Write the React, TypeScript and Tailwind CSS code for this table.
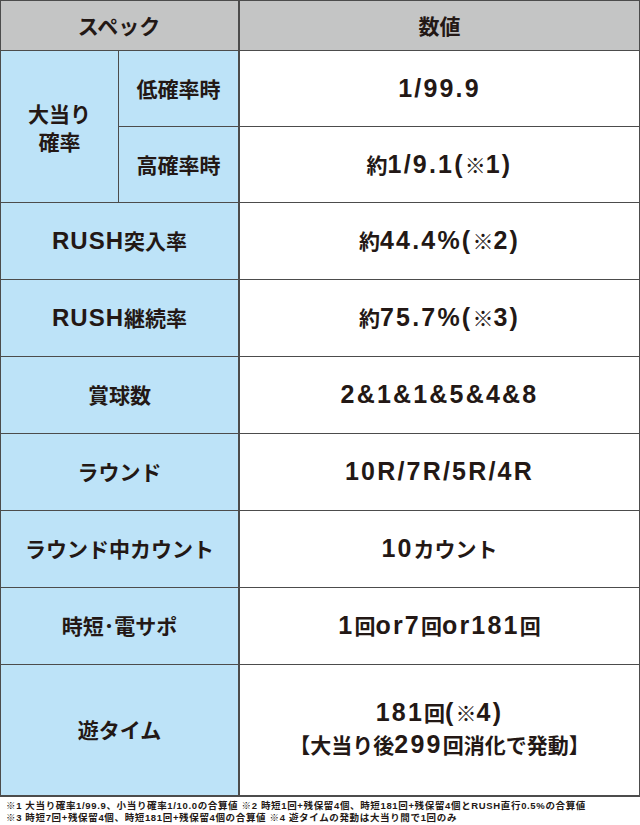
const CJK = /[\u203b\u3000-\u30ff\u4e00-\u9fff\uff00-\uffef]/;

type Run = { cjk: boolean; text: string };

const toRuns = (s: string): Run[] => {
  const out: Run[] = [];
  for (const ch of s) {
    const cjk = CJK.test(ch);
    const last = out[out.length - 1];
    if (last && last.cjk === cjk) last.text += ch;
    else out.push({ cjk, text: ch });
  }
  return out;
};

// Latin is drawn wider-spaced than the kana/kanji, as on the original sheet
const Mixed = ({ text, wide }: { text: string; wide?: boolean }) => (
  <>
    {toRuns(text).map((r, i) =>
      r.cjk ? (
        <span key={i} className="font-['Noto_Sans_CJK_JP',sans-serif] text-[21px]">
          {r.text}
        </span>
      ) : (
        <span
          key={i}
          className={
            wide
              ? "font-['Liberation_Sans',sans-serif] text-[25px] tracking-[2.2px]"
              : "font-['Liberation_Sans',sans-serif] text-[24px] tracking-[1px]"
          }
        >
          {r.text}
        </span>
      )
    )}
  </>
);

const rows = [
  { label: 'RUSH突入率', value: '約44.4%(※2)' },
  { label: 'RUSH継続率', value: '約75.7%(※3)' },
  { label: '賞球数', value: '2&1&1&5&4&8' },
  { label: 'ラウンド', value: '10R/7R/5R/4R' },
  { label: 'ラウンド中カウント', value: '10カウント' },
  { label: '時短･電サポ', value: '1回or7回or181回' },
];

const label = 'flex items-center justify-center bg-[#bde3f8] text-center';
const value = 'ml-px flex items-center justify-center bg-white text-center';

export default function App() {
  return (
    <div className="w-[640px] h-[825px] bg-white font-['Liberation_Sans','Noto_Sans_CJK_JP',sans-serif] font-bold text-[#231815]">
      <div className="grid grid-cols-[117px_119px_1fr] grid-rows-[49px_75px_75px_76px_76px_76px_76px_76px_76px_130px] gap-px bg-[#4c4c4c] p-px pb-[2px]">
        {/* header */}
        <div className="col-span-2 flex items-center justify-center bg-[#c4c5c5] pr-px text-[21px] font-['Noto_Sans_CJK_JP',sans-serif]">
          スペック
        </div>
        <div className="ml-px flex items-center justify-center bg-[#c4c5c5] text-[21px] font-['Noto_Sans_CJK_JP',sans-serif]">
          数値
        </div>

        {/* 大当り確率 */}
        <div className={`${label} row-span-2 flex-col leading-[28px] text-[21px] font-['Noto_Sans_CJK_JP',sans-serif]`}>
          <span>大当り</span>
          <span>確率</span>
        </div>
        <div className={`${label} text-[21px] font-['Noto_Sans_CJK_JP',sans-serif]`}>低確率時</div>
        <div className={value}>
          <Mixed text="1/99.9" wide />
        </div>
        <div className={`${label} text-[21px] font-['Noto_Sans_CJK_JP',sans-serif]`}>高確率時</div>
        <div className={value}>
          <Mixed text="約1/9.1(※1)" wide />
        </div>

        {rows.map((r) => (
          <div key={r.label} className="contents">
            <div className={`${label} col-span-2`}>
              <Mixed text={r.label} />
            </div>
            <div className={value}>
              <Mixed text={r.value} wide />
            </div>
          </div>
        ))}

        {/* 遊タイム */}
        <div className={`${label} col-span-2 text-[21px] font-['Noto_Sans_CJK_JP',sans-serif]`}>遊タイム</div>
        <div className={`${value} flex-col leading-[29px]`}>
          <div>
            <Mixed text="181回(※4)" wide />
          </div>
          <div>
            <Mixed text="【大当り後299回消化で発動】" wide />
          </div>
        </div>
      </div>

      {/* notes */}
      <div className="px-[6px] pt-[3px] text-[9.5px] leading-[12px] tracking-[0.65px]">
        <p>※1 大当り確率1/99.9、小当り確率1/10.0の合算値 ※2 時短1回+残保留4個、時短181回+残保留4個とRUSH直行0.5%の合算値</p>
        <p>※3 時短7回+残保留4個、時短181回+残保留4個の合算値 ※4 遊タイムの発動は大当り間で1回のみ</p>
      </div>
    </div>
  );
}
